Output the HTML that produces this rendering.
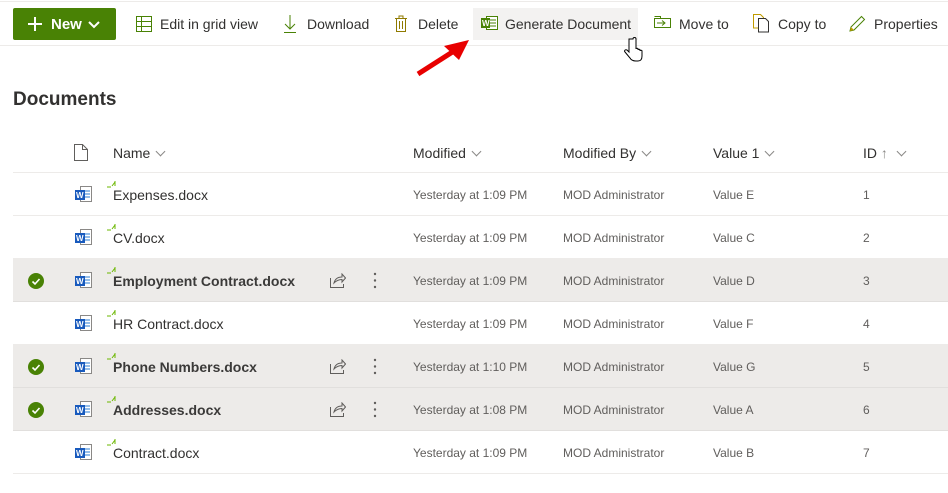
<!DOCTYPE html>
<html><head><style>
*{margin:0;padding:0;box-sizing:border-box}
body{width:948px;height:493px;background:#fff;font-family:"Liberation Sans",sans-serif;color:#323130;position:relative;overflow:hidden}
.a{position:absolute;white-space:nowrap}
.tb{font-size:14px;top:16px;color:#323130}
.row{position:absolute;left:13px;width:935px;height:43px;border-bottom:1px solid #edebe9}
.sel{background:#edebe9;border-bottom:1px solid #e1dfdd}
.row .c{position:absolute;top:15px;font-size:12px;color:#605e5c;white-space:nowrap}
.row .n{position:absolute;top:14px;left:100px;font-size:14px;color:#323130}
.sel .n{font-weight:bold;color:#3b3a39}
.wi{position:absolute;left:62px;top:13px}
.ck{position:absolute;left:15px;top:14px;width:16px;height:16px;border-radius:50%;background:#498205}
.hd{font-size:14px;color:#323130;top:145px}
.chev{display:inline-block;width:7px;height:7px;border-right:1px solid #8a8886;border-bottom:1px solid #8a8886;transform:rotate(45deg);margin-left:7px;position:relative;top:-3px}
</style></head><body>
<div class="a" style="left:0;top:1px;width:948px;height:1px;background:#edebe9"></div>
<div class="a" style="left:0;top:45px;width:948px;height:1px;background:#edebe9"></div>
<div class="a" style="left:13px;top:8px;width:103px;height:32px;background:#498205;border-radius:2px;color:#fff;font-size:15px;font-weight:bold;padding:7px 0 0 14px">
<svg width="14" height="14" style="position:absolute;left:15px;top:9px"><path d="M7 0V14M0 7H14" stroke="#fff" stroke-width="2"/></svg>
<span style="position:absolute;left:38px;top:8px">New</span>
<svg width="12" height="8" style="position:absolute;left:75px;top:13px"><path d="M1 1L6 6L11 1" stroke="#fff" stroke-width="2" fill="none"/></svg>
</div>
<svg class="a" style="left:136px;top:16px" width="16" height="16"><path d="M.5.5h15v15H.5zM.5 5.5h15M.5 10.5h15M5.5.5v15" stroke="#498205" fill="none"/></svg>
<div class="a tb" style="left:160px">Edit in grid view</div>
<svg class="a" style="left:284px;top:15px" width="12" height="18"><path d="M6 0v14M1 9l5 5 5-5M0 17.5h12" stroke="#498205" fill="none"/></svg>
<div class="a tb" style="left:307px">Download</div>
<svg class="a" style="left:394px;top:15px" width="14" height="17"><path d="M1 3.5h12M5 3.5V1h4v2.5M2.5 3.5v13h9v-13M5.5 6v8M8.5 6v8" stroke="#8f7a00" fill="none"/></svg>
<div class="a tb" style="left:418px">Delete</div>
<div class="a" style="left:473px;top:8px;width:165px;height:32px;background:#f3f2f1"></div>
<svg class="a" style="left:481px;top:16px" width="17" height="14"><rect x="5.5" y=".5" width="11" height="13" fill="#fff" stroke="#498205"/><path d="M9 4h6M9 7h6M9 10h6" stroke="#498205"/><rect x="0" y="2" width="9" height="10" fill="#498205"/><text x="1" y="10" font-size="8" fill="#fff" font-family="Liberation Sans" font-weight="bold">W</text></svg>
<div class="a tb" style="left:505px">Generate Document</div>
<svg class="a" style="left:654px;top:16px" width="17" height="14"><path d="M.5 2.5h16v9H.5zM.5.5h6v2" stroke="#498205" fill="none"/><path d="M3 7h8M8 4.5l3 2.5-3 2.5" stroke="#498205" fill="none"/></svg>
<div class="a tb" style="left:679px">Move to</div>
<svg class="a" style="left:753px;top:14px" width="16" height="19"><path d="M.5 .5h7l3 3V14H.5z" stroke="#c19c00" fill="#fff"/><path d="M5.5 4.5h7l3 3V18h-10z" stroke="#323130" fill="#fff"/></svg>
<div class="a tb" style="left:778px">Copy to</div>
<svg class="a" style="left:849px;top:15px" width="17" height="17"><path d="M1 16l1-4L12.5 1.5l3 3L5 15z" stroke="#498205" fill="none"/><path d="M1 16l1-4 3 3z" fill="#c19c00"/></svg>
<div class="a tb" style="left:874px">Properties</div>
<svg class="a" style="left:414px;top:38px" width="60" height="40"><path d="M4 36L40 13" stroke="#e80000" stroke-width="5"/><path d="M55 2L30 8 45 22z" fill="#e80000"/></svg>
<svg class="a" style="left:623px;top:37px" width="20" height="26"><path d="M6 2v13l-2-2c-2-1-3 1-2 2l5 6c1 2 3 3 6 3h2c3 0 4-2 4-5v-5c0-1-2-1-2 0v-1c0-1-2-1-2 0v-1c0-1-2-1-2 0V2c0-2-3-2-3 0z" fill="#fff" stroke="#000"/></svg>
<div class="a" style="left:13px;top:89px;font-size:19px;font-weight:bold;color:#323130">Documents</div>
<svg class="a" style="left:74px;top:144px" width="14" height="17"><path d="M.5.5h8l5 5v11H.5zM8.5.5v5h5" stroke="#605e5c" fill="none"/></svg>
<div class="a hd" style="left:113px">Name<span class="chev"></span></div>
<div class="a hd" style="left:413px">Modified<span class="chev"></span></div>
<div class="a hd" style="left:563px">Modified By<span class="chev"></span></div>
<div class="a hd" style="left:713px">Value 1<span class="chev"></span></div>
<div class="a hd" style="left:863px">ID <span style="color:#8a8886">↑</span><span class="chev" style="margin-left:10px"></span></div>
<div class="a" style="left:13px;top:172px;width:935px;height:1px;background:#edebe9"></div>

<div class="row" style="top:173px"><svg class="wi" width="18" height="17"><rect x="5.5" y=".5" width="11" height="15" fill="#fff" stroke="#8a8886"/><path d="M9 5h6M9 8h6M9 11h6" stroke="#2b7cd3"/><rect x="0" y="4" width="10" height="10" fill="#185abd"/><text x="1" y="12" font-size="8" fill="#fff" font-family="Liberation Sans" font-weight="bold">W</text></svg><svg class="a" style="left:94px;top:8px" width="10" height="8"><path d="M0 6h4M5 5l3-4M8 5V0" stroke="#6bb700"/></svg><div class="n">Expenses.docx</div><div class="c" style="left:400px">Yesterday at 1:09 PM</div><div class="c" style="left:550px">MOD Administrator</div><div class="c" style="left:700px">Value E</div><div class="c" style="left:850px">1</div></div>
<div class="row" style="top:216px"><svg class="wi" width="18" height="17"><rect x="5.5" y=".5" width="11" height="15" fill="#fff" stroke="#8a8886"/><path d="M9 5h6M9 8h6M9 11h6" stroke="#2b7cd3"/><rect x="0" y="4" width="10" height="10" fill="#185abd"/><text x="1" y="12" font-size="8" fill="#fff" font-family="Liberation Sans" font-weight="bold">W</text></svg><svg class="a" style="left:94px;top:8px" width="10" height="8"><path d="M0 6h4M5 5l3-4M8 5V0" stroke="#6bb700"/></svg><div class="n">CV.docx</div><div class="c" style="left:400px">Yesterday at 1:09 PM</div><div class="c" style="left:550px">MOD Administrator</div><div class="c" style="left:700px">Value C</div><div class="c" style="left:850px">2</div></div>
<div class="row sel" style="top:259px"><div class="ck"><svg width="16" height="16"><path d="M4.5 8.5l2.5 2.5 4.5-5" stroke="#fff" stroke-width="1.6" fill="none"/></svg></div><svg class="wi" width="18" height="17"><rect x="5.5" y=".5" width="11" height="15" fill="#fff" stroke="#8a8886"/><path d="M9 5h6M9 8h6M9 11h6" stroke="#2b7cd3"/><rect x="0" y="4" width="10" height="10" fill="#185abd"/><text x="1" y="12" font-size="8" fill="#fff" font-family="Liberation Sans" font-weight="bold">W</text></svg><svg class="a" style="left:94px;top:8px" width="10" height="8"><path d="M0 6h4M5 5l3-4M8 5V0" stroke="#6bb700"/></svg><div class="n">Employment Contract.docx</div><svg class="a" style="left:317px;top:14px" width="16" height="15"><path d="M.5 5v9.5h13V11M4 10c1-4 4-6 8-6V1l3.5 4L12 9V6.5C8 6.5 6 8 4 10z" stroke="#605e5c" fill="none"/></svg><svg class="a" style="left:360px;top:13px" width="4" height="17"><circle cx="2" cy="2" r="1.2" fill="#605e5c"/><circle cx="2" cy="8.5" r="1.2" fill="#605e5c"/><circle cx="2" cy="15" r="1.2" fill="#605e5c"/></svg><div class="c" style="left:400px">Yesterday at 1:09 PM</div><div class="c" style="left:550px">MOD Administrator</div><div class="c" style="left:700px">Value D</div><div class="c" style="left:850px">3</div></div>
<div class="row" style="top:302px"><svg class="wi" width="18" height="17"><rect x="5.5" y=".5" width="11" height="15" fill="#fff" stroke="#8a8886"/><path d="M9 5h6M9 8h6M9 11h6" stroke="#2b7cd3"/><rect x="0" y="4" width="10" height="10" fill="#185abd"/><text x="1" y="12" font-size="8" fill="#fff" font-family="Liberation Sans" font-weight="bold">W</text></svg><svg class="a" style="left:94px;top:8px" width="10" height="8"><path d="M0 6h4M5 5l3-4M8 5V0" stroke="#6bb700"/></svg><div class="n">HR Contract.docx</div><div class="c" style="left:400px">Yesterday at 1:09 PM</div><div class="c" style="left:550px">MOD Administrator</div><div class="c" style="left:700px">Value F</div><div class="c" style="left:850px">4</div></div>
<div class="row sel" style="top:345px"><div class="ck"><svg width="16" height="16"><path d="M4.5 8.5l2.5 2.5 4.5-5" stroke="#fff" stroke-width="1.6" fill="none"/></svg></div><svg class="wi" width="18" height="17"><rect x="5.5" y=".5" width="11" height="15" fill="#fff" stroke="#8a8886"/><path d="M9 5h6M9 8h6M9 11h6" stroke="#2b7cd3"/><rect x="0" y="4" width="10" height="10" fill="#185abd"/><text x="1" y="12" font-size="8" fill="#fff" font-family="Liberation Sans" font-weight="bold">W</text></svg><svg class="a" style="left:94px;top:8px" width="10" height="8"><path d="M0 6h4M5 5l3-4M8 5V0" stroke="#6bb700"/></svg><div class="n">Phone Numbers.docx</div><svg class="a" style="left:317px;top:14px" width="16" height="15"><path d="M.5 5v9.5h13V11M4 10c1-4 4-6 8-6V1l3.5 4L12 9V6.5C8 6.5 6 8 4 10z" stroke="#605e5c" fill="none"/></svg><svg class="a" style="left:360px;top:13px" width="4" height="17"><circle cx="2" cy="2" r="1.2" fill="#605e5c"/><circle cx="2" cy="8.5" r="1.2" fill="#605e5c"/><circle cx="2" cy="15" r="1.2" fill="#605e5c"/></svg><div class="c" style="left:400px">Yesterday at 1:10 PM</div><div class="c" style="left:550px">MOD Administrator</div><div class="c" style="left:700px">Value G</div><div class="c" style="left:850px">5</div></div>
<div class="row sel" style="top:388px"><div class="ck"><svg width="16" height="16"><path d="M4.5 8.5l2.5 2.5 4.5-5" stroke="#fff" stroke-width="1.6" fill="none"/></svg></div><svg class="wi" width="18" height="17"><rect x="5.5" y=".5" width="11" height="15" fill="#fff" stroke="#8a8886"/><path d="M9 5h6M9 8h6M9 11h6" stroke="#2b7cd3"/><rect x="0" y="4" width="10" height="10" fill="#185abd"/><text x="1" y="12" font-size="8" fill="#fff" font-family="Liberation Sans" font-weight="bold">W</text></svg><svg class="a" style="left:94px;top:8px" width="10" height="8"><path d="M0 6h4M5 5l3-4M8 5V0" stroke="#6bb700"/></svg><div class="n">Addresses.docx</div><svg class="a" style="left:317px;top:14px" width="16" height="15"><path d="M.5 5v9.5h13V11M4 10c1-4 4-6 8-6V1l3.5 4L12 9V6.5C8 6.5 6 8 4 10z" stroke="#605e5c" fill="none"/></svg><svg class="a" style="left:360px;top:13px" width="4" height="17"><circle cx="2" cy="2" r="1.2" fill="#605e5c"/><circle cx="2" cy="8.5" r="1.2" fill="#605e5c"/><circle cx="2" cy="15" r="1.2" fill="#605e5c"/></svg><div class="c" style="left:400px">Yesterday at 1:08 PM</div><div class="c" style="left:550px">MOD Administrator</div><div class="c" style="left:700px">Value A</div><div class="c" style="left:850px">6</div></div>
<div class="row" style="top:431px"><svg class="wi" width="18" height="17"><rect x="5.5" y=".5" width="11" height="15" fill="#fff" stroke="#8a8886"/><path d="M9 5h6M9 8h6M9 11h6" stroke="#2b7cd3"/><rect x="0" y="4" width="10" height="10" fill="#185abd"/><text x="1" y="12" font-size="8" fill="#fff" font-family="Liberation Sans" font-weight="bold">W</text></svg><svg class="a" style="left:94px;top:8px" width="10" height="8"><path d="M0 6h4M5 5l3-4M8 5V0" stroke="#6bb700"/></svg><div class="n">Contract.docx</div><div class="c" style="left:400px">Yesterday at 1:09 PM</div><div class="c" style="left:550px">MOD Administrator</div><div class="c" style="left:700px">Value B</div><div class="c" style="left:850px">7</div></div>
</body></html>
